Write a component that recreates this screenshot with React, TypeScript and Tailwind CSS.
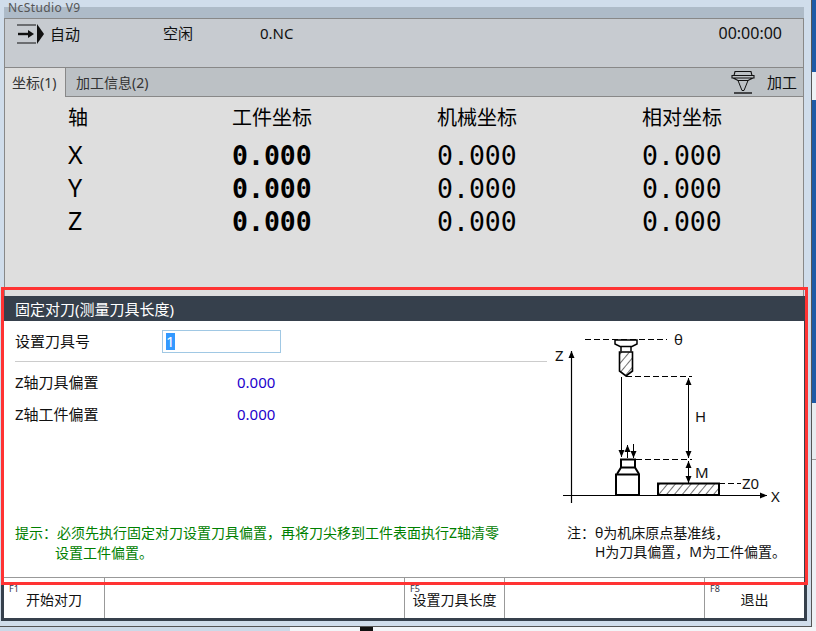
import React from 'react';

const axes = ['X', 'Y', 'Z'];
const fkeys = [
  { key: 'F1', label: '开始对刀', width: 'w-[101px]' },
  { key: '', label: '', width: 'w-[300px]' },
  { key: 'F5', label: '设置刀具长度', width: 'w-[100px]' },
  { key: '', label: '', width: 'w-[200px]' },
  { key: 'F8', label: '退出', width: 'flex-1' },
];

const AutoIcon = () => (
  <svg width="29" height="20" viewBox="0 0 29 20" className="shrink-0">
    <path d="M1 1H20M1 19H20" stroke="#111" strokeWidth="1.2" fill="none" />
    <path d="M2 10H14" stroke="#111" strokeWidth="2.4" />
    <path d="M12 6L18 10L12 14Z" fill="#111" />
    <path d="M21 0L28 10L21 20Z" fill="#111" />
  </svg>
);

const ToolIcon = () => (
  <svg width="24" height="24" viewBox="0 0 24 24" className="shrink-0">
    <path d="M4 1.5H20L21 5.5H3ZM1 5.5H23V8H1ZM2 8L7 10.5H17L22 8" stroke="#111" strokeWidth="1.1" fill="none" />
    <path d="M7 10.5L11 20.5H13L17 10.5" stroke="#111" strokeWidth="1" fill="none" />
    <path d="M3 23H21" stroke="#111" strokeWidth="1.4" />
  </svg>
);

const Diagram = () => (
  <svg width="240" height="175" viewBox="550 330 240 175">
    <defs>
      <pattern id="hatch" width="6" height="6" patternUnits="userSpaceOnUse" patternTransform="rotate(40)">
        <path d="M0 0V6" stroke="#111" strokeWidth="1.2" />
      </pattern>
      <marker id="head" markerWidth="8" markerHeight="8" refX="7" refY="3.5" orient="auto-start-reverse" markerUnits="userSpaceOnUse">
        <path d="M0 0.5L7 3.5L0 6.5Z" fill="#000" />
      </marker>
    </defs>
    {/* axes */}
    <path d="M571.5 503V351" stroke="#000" strokeWidth="1.2" markerEnd="url(#head)" />
    <path d="M563 495.5H767" stroke="#000" strokeWidth="1.2" markerEnd="url(#head)" />
    {/* dashed references */}
    <g stroke="#000" strokeWidth="1" strokeDasharray="6 3" fill="none">
      <path d="M585 339.5H667" />
      <path d="M626 376.5H692" />
      <path d="M636 459.5H692" />
      <path d="M719 483.5H741" />
    </g>
    {/* tool */}
    <path d="M615 340H637V344L632 346.5H620L615 344Z" fill="#fff" stroke="#000" strokeWidth="1.5" />
    <path d="M621 346.5V351.5M631 346.5V351.5" stroke="#000" strokeWidth="1.5" />
    <path d="M619.5 352H632.5V371L626 376L619.5 371Z" fill="url(#hatch)" stroke="#000" strokeWidth="1.6" />
    {/* travel and measure arrows */}
    <path d="M621.5 377V457" stroke="#000" strokeWidth="1" markerEnd="url(#head)" />
    <path d="M627.5 458V445" stroke="#000" strokeWidth="1" markerEnd="url(#head)" />
    <path d="M633.5 444V458" stroke="#000" strokeWidth="1" markerEnd="url(#head)" />
    <path d="M688.5 378V458" stroke="#000" strokeWidth="1" markerStart="url(#head)" markerEnd="url(#head)" />
    <path d="M688.5 461V483" stroke="#000" strokeWidth="1" markerStart="url(#head)" markerEnd="url(#head)" />
    {/* sensor */}
    <path d="M621 459.5H635V467.5H621ZM621 467.5L617 474M635 467.5L639 474" fill="none" stroke="#000" strokeWidth="2" />
    <rect x="616" y="474.5" width="23" height="20.5" fill="#fff" stroke="#000" strokeWidth="2" />
    {/* workpiece */}
    <rect x="658" y="483.5" width="61" height="11.5" fill="url(#hatch)" stroke="#000" strokeWidth="2" />
    <g fontSize="15" fill="#111">
      <text x="674" y="345">θ</text>
      <text x="555" y="361">Z</text>
      <text x="695" y="422">H</text>
      <text x="695" y="478">M</text>
      <text x="742" y="489">Z0</text>
      <text x="771" y="502">X</text>
    </g>
  </svg>
);

const App: React.FC = () => {
  return (
    <div className="relative w-[816px] h-[631px] overflow-hidden flex flex-col bg-[#f3f5f8] font-['Noto_Sans','Noto_Sans_CJK_SC',sans-serif] text-[14px] text-[#111]">
      <div className="flex h-[627px] shrink-0">
        <div className="w-[812px] flex flex-col bg-[#d0ddeb] border-r border-b border-[#555]">
          {/* title bar */}
          <div className="h-[18px] pl-[8px] relative shrink-0">
            <div className="absolute left-[4px] top-[7px] w-[800px] h-[11px] bg-[#aebbc8]" />
            <span className="relative block text-[12px] leading-[15px] text-[#555] tracking-[0.4px]">NcStudio V9</span>
          </div>

          {/* status */}
          <div className="ml-[4px] w-[800px] h-[49px] shrink-0 flex items-start pt-[4px] bg-[#c7cbd0] border border-[#888] border-b-0 text-[15px]">
            <div className="w-[158px] pl-[11px] flex items-center gap-[5px]">
              <AutoIcon />
              <span>自动</span>
            </div>
            <span className="w-[97px] leading-[20px]">空闲</span>
            <span className="flex-1 leading-[20px]">0.NC</span>
            <span className="pr-[21px] leading-[20px] text-[16px]">00:00:00</span>
          </div>

          {/* tabs */}
          <div className="ml-[4px] w-[800px] h-[30px] shrink-0 flex bg-[#bcc1c5] border border-[#888] border-b-[#888]">
            <div className="w-[61px] -mb-px bg-[#dedede] border-r border-[#888] pl-[7px] leading-[30px] text-[#333]">坐标(1)</div>
            <div className="pl-[10px] leading-[30px] text-[#333]">加工信息(2)</div>
            <div className="ml-auto flex items-center pr-[6px]">
              <ToolIcon />
              <span className="ml-[12px] text-[15px]">加工</span>
            </div>
          </div>

          {/* coordinates */}
          <div className="ml-[4px] w-[800px] h-[199px] shrink-0 pl-[63px] pt-[8px] bg-[#dedede] border-x border-[#888] text-black">
            <div className="grid grid-cols-[164px_205px_205px_1fr] text-[20px] leading-[26px] mb-[8px]">
              <span>轴</span>
              <span>工件坐标</span>
              <span>机械坐标</span>
              <span>相对坐标</span>
            </div>
            {axes.map((axis) => (
              <div key={axis} className="grid grid-cols-[164px_205px_205px_1fr] h-[33px] items-center">
                <span className="text-[25px] pb-[3px] leading-[29px]">{axis}</span>
                <span className="font-['DejaVu_Sans_Mono',monospace] text-[26.5px] leading-[33px] font-bold">0.000</span>
                <span className="font-['DejaVu_Sans_Mono',monospace] text-[26.5px] leading-[33px]">0.000</span>
                <span className="font-['DejaVu_Sans_Mono',monospace] text-[26.5px] leading-[33px]">0.000</span>
              </div>
            ))}
          </div>

          {/* tool setting dialog */}
          <div className="ml-[1px] w-[806px] h-[325px] shrink-0 flex flex-col bg-white border-x-[3px] border-b-[3px] border-[#36404c]">
            <div className="h-[25px] shrink-0 bg-[#36404c] text-white pl-[11px] text-[15px] leading-[26px]">固定对刀(测量刀具长度)</div>
            <div className="flex-1 flex">
              <div className="w-[543px] pl-[11px] pt-[9px] flex flex-col">
                <div className="flex items-center h-[23px]">
                  <span className="w-[147px] text-[15px]">设置刀具号</span>
                  <div className="w-[119px] h-[23px] border border-[#a0c8e4] pl-[3px] pt-[2px]">
                    <span className="block w-[9px] h-[17px] bg-[#3399ff] text-white text-[15px] leading-[17px]">1</span>
                  </div>
                </div>
                <div className="mt-[8px] h-px bg-[#ccc]" />
                <div className="mt-[10px] flex h-[20px] items-center">
                  <span className="w-[222px] text-[15px]">Z轴刀具偏置</span>
                  <span className="text-[#2200cc] text-[15px]">0.000</span>
                </div>
                <div className="mt-[12px] flex h-[20px] items-center">
                  <span className="w-[222px] text-[15px]">Z轴工件偏置</span>
                  <span className="text-[#2200cc] text-[15px]">0.000</span>
                </div>
                <div className="mt-auto mb-[14px] text-[#008000] leading-[20px] whitespace-nowrap">
                  <div>提示：必须先执行固定对刀设置刀具偏置，再将刀尖移到工件表面执行Z轴清零</div>
                  <div className="pl-[40px]">设置工件偏置。</div>
                </div>
              </div>
              <div className="flex-1 pl-[3px] pt-[9px] flex flex-col">
                <Diagram />
                <div className="mt-auto mb-[16px] pl-[17px] leading-[19px] whitespace-nowrap">
                  <div>注：θ为机床原点基准线，</div>
                  <div className="pl-[28px]">H为刀具偏置，M为工件偏置。</div>
                </div>
              </div>
            </div>
            <div className="h-[41px] shrink-0 flex border-t border-[#999]">
              {fkeys.map((f, i) => (
                <div key={i} className={`${f.width} relative flex items-center justify-center pt-[2px] ${i < fkeys.length - 1 ? 'border-r border-[#999]' : ''}`}>
                  {f.key && <span className="absolute left-[5px] top-[6px] text-[9px] leading-[10px] text-[#334]">{f.key}</span>}
                  {f.label}
                </div>
              ))}
            </div>
          </div>
        </div>

        {/* what shows of the window behind */}
        <div className="flex-1 flex flex-col">
          <div className="h-[72px] bg-[#1d5aa6]" />
          <div className="h-[28px] bg-[#eef2f6]" />
          <div className="h-[303px] bg-[#1d5aa6]" />
          <div className="h-[57px] bg-[#e8ecf0] border-b border-[#999]" />
          <div className="flex-1 bg-[#eef1f5]" />
        </div>
      </div>

      <div className="h-[4px] flex">
        <div className="w-[290px] bg-[#ccd9e8]" />
        <div className="ml-[70px] w-[13px] bg-[#111]" />
      </div>

      {/* red annotation drawn over the screenshot */}
      <div className="absolute left-[1px] top-[287px] w-[807px] h-[298px] border-[3px] border-[#ff3333] pointer-events-none" />
    </div>
  );
};

export default App;
